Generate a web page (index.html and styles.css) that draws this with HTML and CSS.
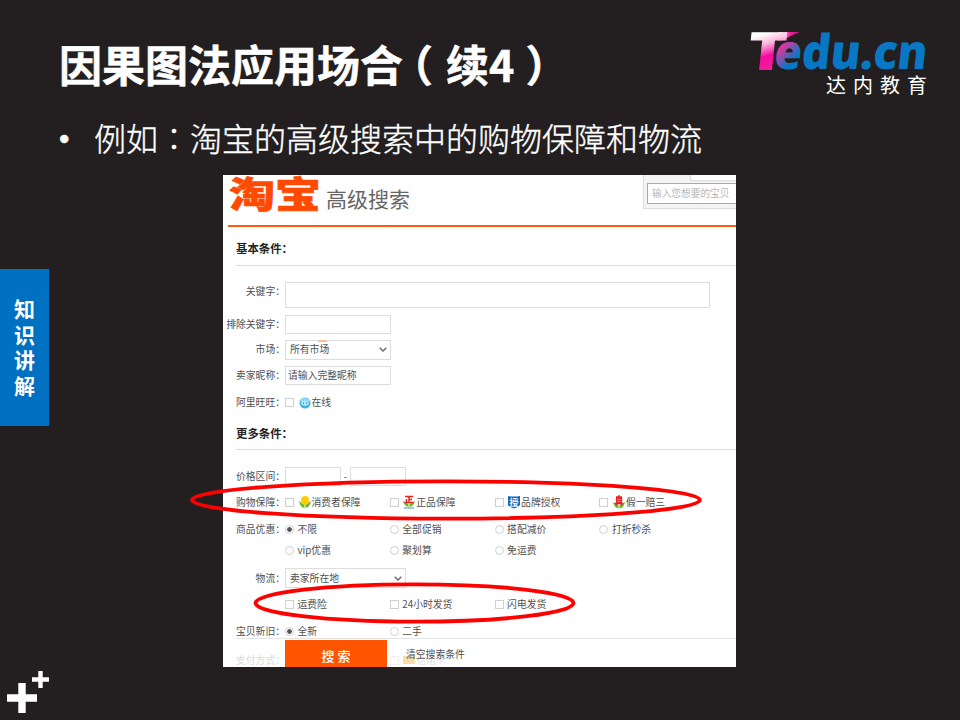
FILE: index.html
```html
<!DOCTYPE html>
<html lang="zh-CN">
<head>
<meta charset="utf-8">
<title>因果图法应用场合（续4）</title>
<link rel="stylesheet" href="styles.css">
</head>
<body>
<div class="slide">
  <aside class="rail">
    <div class="tab"><span>知</span><span>识</span><span>讲</span><span>解</span></div>
    <svg class="plus" viewBox="0 0 59 49" width="59" height="49">
      <path d="M7 27H37M22 12V42" stroke="#fff" stroke-width="7.4"/>
      <path d="M32 8.5H49M40.500 0V17" stroke="#fff" stroke-width="4.4"/>
    </svg>
  </aside>
  <main class="content">
    <header class="head">
      <h1>因果图法应用场合<span class="paren-l">（</span>续4<span class="paren-r">）</span></h1>
      <svg class="logo" viewBox="740 20 200 90" width="200" height="90">
        <defs>
          <linearGradient id="gt" gradientUnits="userSpaceOnUse" x1="12" y1="-40" x2="24" y2="0">
            <stop offset="0.1" stop-color="#fff"/><stop offset="0.35" stop-color="#fbb4dc"/><stop offset="0.65" stop-color="#f80aa0"/><stop offset="1" stop-color="#f0209a"/>
          </linearGradient>
          <linearGradient id="gs" x1="0" y1="0" x2="1" y2="0">
            <stop offset="0" stop-color="#fbb4dc"/><stop offset="0.6" stop-color="#f01c98"/><stop offset="1" stop-color="#b01870"/>
          </linearGradient>
          <linearGradient id="ge" gradientUnits="userSpaceOnUse" x1="3" y1="-20" x2="18" y2="-8">
            <stop offset="0" stop-color="#f2309c"/><stop offset="1" stop-color="#0878c4"/>
          </linearGradient>
        </defs>
        <path d="M778 32H800Q791 35 784 40L778 40.500Z" fill="url(#gs)"/>
        <text class="logo-t" transform="translate(746 70) skewX(-6)" textLength="39" lengthAdjust="spacingAndGlyphs" fill="url(#gt)">T</text>
        <text class="logo-edu" transform="translate(773 69) skewX(-6)" textLength="153" lengthAdjust="spacingAndGlyphs" fill="#0878c4"><tspan fill="url(#ge)">e</tspan>du.cn</text>
        <text class="logo-cn" x="826" y="93">达内教育</text>
      </svg>
    </header>
    <p class="bullet"><span class="dot">•</span><span>例如<span class="colon" lang="zh-TW">：</span>淘宝的高级搜索中的购物保障和物流</span></p>

    <div class="shot">
      <div class="page">
        <div class="top">
          <svg class="taobao" viewBox="0 0 94 40" width="94" height="40"><text x="1" y="33" textLength="92" lengthAdjust="spacingAndGlyphs">淘宝</text></svg>
          <span class="adv">高级搜索</span>
          <div class="sbox"><div class="stab"></div><div class="sinput">输入您想要的宝贝</div></div>
        </div>
        <h2 class="h-basic">基本条件：</h2>
        <div class="row r-kw"><label>关键字：</label><div class="box w-kw"></div></div>
        <div class="row r-ex"><label>排除关键字：</label><div class="box w-m"></div></div>
        <div class="row r-mk"><label>市场：</label><div class="box sel w-m">所有市场<svg width="8" height="5" viewBox="0 0 8 5"><path d="M.7.7L4 4 7.300.7"/></svg><i class="mark"></i></div></div>
        <div class="row r-nick"><label>卖家昵称：</label><div class="box nick w-m">请输入完整昵称</div></div>
        <div class="row r-ww"><label>阿里旺旺：</label><div class="opt"><i class="cb"></i>
          <svg class="ico" width="14" height="13" viewBox="0 0 14 13"><circle cx="7" cy="7" r="5.500" fill="#45b0e0"/><path d="M1 4.500Q6 0 11.500 4L13 6 10 5.500 4 6Z" fill="#8cdcf5"/><ellipse cx="7" cy="7.300" rx="3.800" ry="2.400" fill="#b9ecfa"/><path d="M5.500 6.500v1.500M8.500 6.500v1.500" stroke="#2784b8"/></svg>在线</div></div>
        <h2 class="h-more">更多条件：</h2>
        <div class="row r-price"><label>价格区间：</label><div class="box w-s"></div><span class="dash">-</span><div class="box w-s"></div></div>
        <div class="row r-guard"><label>购物保障：</label><div class="opts">
          <div class="opt"><i class="cb"></i><svg class="ico" width="14" height="14" viewBox="0 0 14 14"><path d="M1 6Q2 12 6.500 13V10ZM13 6Q12 12 7.500 13V10Z" fill="#62b92e"/><path d="M4 2Q7 0 10 2 12 5 10 8L7 10.500 4 8Q2 5 4 2Z" fill="#fc0"/></svg>消费者保障</div>
          <div class="opt"><i class="cb"></i><svg class="ico" width="14" height="14" viewBox="0 0 14 14"><path d="M1 6Q2 11 6.500 12V9ZM13 6Q12 11 7.500 12V9Z" fill="#62b92e"/><path d="M2 13H12" stroke="#4a90c8"/><path d="M3 1.500H11M7 2V7.500M7.500 4.500H10M4.500 4V7.500M2.500 7.500H11.500" stroke="#e22" stroke-width="1.500"/></svg>正品保障</div>
          <div class="opt"><i class="cb"></i><svg class="ico" width="14" height="14" viewBox="0 0 14 14"><path d="M1 1Q7 2 13 1V10Q11 13 7 13.500 3 13 1 10Z" fill="#1767b8"/><text x="2.500" y="10.500" class="tiny">授</text></svg>品牌授权</div>
          <div class="opt"><i class="cb"></i><svg class="ico" width="14" height="14" viewBox="0 0 14 14"><path d="M1 7Q2 12.500 6.500 13.500V10ZM13 7Q12 12.500 7.500 13.500V10Z" fill="#62b92e"/><path d="M7 0V3M4 2H10M4.500 3.500H9.500V7.500H4.500ZM5 5.500H9M3 8.500H11M5 9L4 10M9 9L10 10" fill="none" stroke="#e22" stroke-width="1.300"/></svg>假一赔三</div>
        </div></div>
        <div class="row r-deal"><label>商品优惠：</label><div class="opts">
          <div class="opt"><i class="rd on"></i>不限</div><div class="opt"><i class="rd"></i>全部促销</div><div class="opt"><i class="rd"></i>搭配减价</div><div class="opt"><i class="rd"></i>打折秒杀</div>
        </div></div>
        <div class="row r-deal2"><label></label><div class="opts">
          <div class="opt"><i class="rd"></i>vip优惠</div><div class="opt"><i class="rd"></i>聚划算</div><div class="opt"><i class="rd"></i>免运费</div>
        </div></div>
        <div class="row r-ship"><label>物流：</label><div class="box sel w-l">卖家所在地<svg width="8" height="5" viewBox="0 0 8 5"><path d="M.7.7L4 4 7.300.7"/></svg></div></div>
        <div class="row r-ship2"><label></label><div class="opts">
          <div class="opt"><i class="cb"></i>运费险</div><div class="opt"><i class="cb"></i>24小时发货</div><div class="opt"><i class="cb"></i>闪电发货</div>
        </div></div>
        <div class="clip"><div class="row r-age"><label>宝贝新旧：</label><div class="opts">
          <div class="opt"><i class="rd on"></i>全新</div><div class="opt"><i class="rd"></i>二手</div>
        </div></div></div>
        <div class="foot">
          <label class="ghost">支付方式：</label>
          <div class="btn">搜 索</div>
          <span class="clear">清空搜索条件</span>
          <div class="ghost-opt"><i class="cb"></i><i class="card"></i>信用卡</div>
        </div>
      </div>
      <svg class="rings" viewBox="185 470 525 160" width="525" height="160">
        <ellipse cx="446" cy="500" rx="254" ry="18.700"/>
        <ellipse cx="414.500" cy="603" rx="159" ry="18.700"/>
      </svg>
    </div>
  </main>
</div>
</body>
</html>
```
FILE: styles.css
```css
* { box-sizing: border-box; }
body { margin: 0; background: #231f20; font-family: "Noto Sans CJK SC", sans-serif; text-spacing-trim: space-all; }
.slide { width: 960px; height: 720px; overflow: hidden; display: grid; grid-template-columns: 59px 1fr; background: #231f20; }
.rail { display: flex; flex-direction: column; padding-top: 269px; }
.tab { width: 49px; height: 157px; background: #0070c0; color: #fff; font-size: 21px; font-weight: 700; line-height: 25.5px; display: flex; flex-direction: column; align-items: center; padding-top: 27px; }
.plus { display: block; margin-top: 245px; }

.content { min-width: 0; }
.head { display: flex; justify-content: space-between; height: 110px; padding-right: 20px; }
h1 { margin: 31px 0 0; font-size: 43px; line-height: 64px; font-weight: 700; color: #fff; -webkit-text-stroke: .5px #fff; white-space: nowrap; }
.paren-l { margin: 0 13px 0 -13px; }
.paren-r { margin-left: 11px; }
.logo { margin-top: 20px; }
.logo-t { font: 800 53px "Open Sans", sans-serif; }
.logo-edu { font: 800 48px "Open Sans", sans-serif; }
.logo-cn { font-size: 20px; letter-spacing: 7px; fill: #fff; }
.bullet { margin: 0; height: 65px; display: flex; color: #fff; font-size: 32px; font-weight: 300; line-height: 55px; -webkit-text-stroke: .35px #fff; white-space: nowrap; }
.dot { width: 35px; font-family: "Liberation Sans", sans-serif; font-size: 30px; line-height: 58px; }
.colon { font-family: "Noto Sans CJK TC", sans-serif; }

.shot { position: relative; width: 513px; margin-left: 164px; }
.page { height: 492px; overflow: hidden; background: #fff; color: #505050; font-size: 9.8px; line-height: 14px; white-space: nowrap; }
.top { height: 52px; margin-left: 5px; border-bottom: 2px solid #ff5a14; display: flex; align-items: flex-start; }
.taobao { font-size: 36px; font-weight: 900; fill: #ff4a00; stroke: #ff4a00; stroke-width: .6; }
.adv { margin: 8px 0 0 4px; font-size: 21px; line-height: 30px; color: #666; }
.sbox { width: 93px; height: 34px; margin-left: auto; background: #f4f4f4; border: solid #ddd; border-width: 0 0 1px 1px; padding-left: 3px; }
.stab { height: 6px; margin: 0 0 2px 43px; background: #fff; border: solid #ddd; border-width: 0 0 1px 1px; }
.sinput { height: 21px; border: 1px solid #aaa; border-right: 0; background: #fff; padding-left: 4px; font-size: 9.7px; line-height: 18px; color: #b8b8b8; }
h2 { margin: 0 0 0 13px; font-size: 11.4px; line-height: 16px; font-weight: 700; color: #222; border-bottom: 1px solid #ddd; }
.h-basic { height: 39px; padding-top: 13px; }
.h-more { height: 34px; padding-top: 9px; }
.row { display: flex; align-items: center; }
label { width: 62px; flex: none; display: flex; justify-content: flex-end; padding-bottom: 1px; }
.r-kw { height: 34px; margin-top: 12px; }
.r-kw label { padding-bottom: 8px; }
.r-ex { height: 24px; }
.r-mk { height: 27px; }
.r-nick { height: 25px; }
.r-ww { height: 28px; }
.r-price { height: 28px; margin-top: 12px; }
.r-guard { height: 24px; }
.r-deal { height: 22px; margin-top: 4px; }
.r-deal2 { height: 20px; }
.r-ship { height: 20px; margin-top: 8px; }
.r-ship2 { height: 22px; margin-top: 5px; }
.clip { height: 16px; margin: 5px 0 2px; overflow: hidden; }
.r-age { height: 22px; }
.box { border: 1px solid #ddd; height: 19px; line-height: 17px; }
.w-kw { width: 425px; height: 26px; }
.w-m { width: 106px; }
.w-s { width: 56px; }
.w-l { width: 121px; }
.sel { display: flex; justify-content: space-between; align-items: center; padding: 0 3px 0 4px; height: 20px; position: relative; }
.sel path { fill: none; stroke: #666; stroke-width: 1.3; }
.mark { position: absolute; left: 32px; top: -1px; width: 9px; height: 2px; background: #f7bd9c; }
.nick { padding-left: 2px; }
.dash { width: 9px; text-align: center; }
.opts { display: grid; grid-template-columns: repeat(4, 104.8px); }
.opt { display: flex; align-items: center; }
.cb, .rd { width: 9px; height: 9px; flex: none; border: 1px solid #d0d0d0; margin-right: 3.5px; }
.rd { border-radius: 50%; }
.on { background: radial-gradient(circle, #555 0 2px, #fff 2.6px); }
.ico { flex: none; margin-right: 0; }
.tiny { font-size: 9px; font-weight: 700; fill: #fff; }
.foot { position: relative; height: 30px; margin-left: 13px; border-top: 1px solid #e4e4e4; display: flex; align-items: flex-start; }
.ghost { width: 49px; color: #d8d8d8; margin-top: 14px; }
.btn { width: 102px; height: 28px; margin-top: 1px; background: #ff5500; color: #fff; font-size: 13px; font-weight: 500; line-height: 32px; text-align: center; }
.clear { margin: 8px 0 0 19px; position: relative; z-index: 1; }
.ghost-opt { position: absolute; left: 154px; top: 14px; display: flex; align-items: center; color: #ddd; }
.ghost-opt .cb { border-color: #eee; }
.card { width: 12px; height: 8px; margin-right: 2px; background: #fbdcae; }
.rings { position: absolute; left: -38px; top: 295px; fill: none; stroke: #f00; stroke-width: 3.8; }
```
